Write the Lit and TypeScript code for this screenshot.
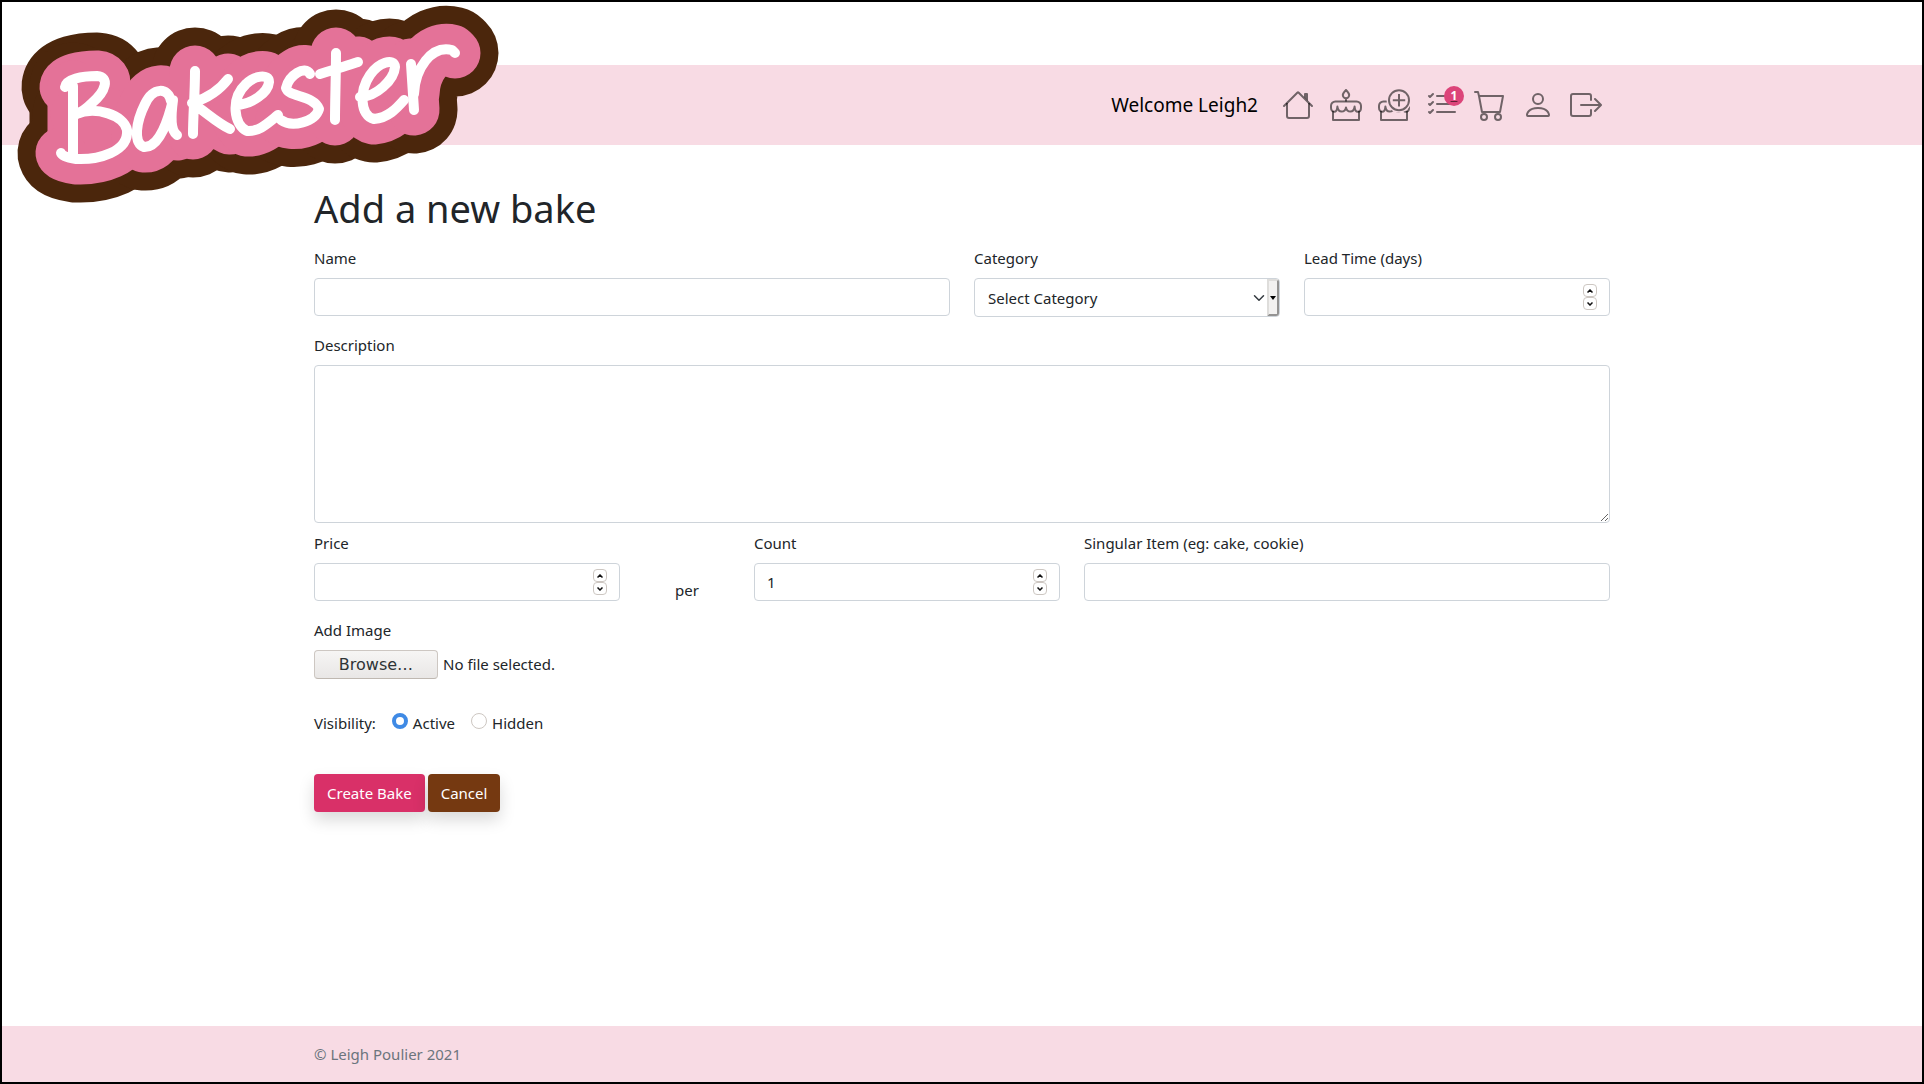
import { LitElement, html, css, svg } from "lit";
import { customElement, state } from "lit/decorators.js";

const cakeShape = svg`<path d="M1.500 11v4.500h13V11"/><path d="M2.700 6.200h10.600a2.200 2.200 0 0 1 2.200 2.200v1c0 1.200-.7 2-1.600 2s-1.500-1-1.600-2.600c-.2 1.500-1 2.500-2.100 2.500S8.200 10.500 8 9.200c-.2 1.300-1.100 2.100-2.200 2.100S3.900 10.300 3.700 8.800c-.1 1.600-.7 2.600-1.600 2.600s-1.600-.8-1.600-2v-1a2.200 2.200 0 0 1 2.200-2.200z"/>`;

const icons = {
  house: svg`<path fill-rule="evenodd" d="M2 13.500V7h1v6.500a.5.5 0 0 0 .5.5h9a.5.5 0 0 0 .5-.5V7h1v6.500a1.500 1.500 0 0 1-1.500 1.500h-9A1.500 1.500 0 0 1 2 13.500zm11-11V6l-2-2V2.500a.5.5 0 0 1 .5-.5h1a.5.5 0 0 1 .5.5z"/><path fill-rule="evenodd" d="M7.293 1.500a1 1 0 0 1 1.414 0l6.647 6.646a.5.5 0 0 1-.708.708L8 2.207 1.354 8.854a.5.5 0 1 1-.708-.708L7.293 1.500z"/>`,
  cart: svg`<path d="M0 1.500A.5.5 0 0 1 .5 1H2a.5.5 0 0 1 .485.379L2.890 3H14.500a.5.5 0 0 1 .491.592l-1.500 8A.5.5 0 0 1 13 12H4a.5.5 0 0 1-.491-.408L2.010 3.607 1.610 2H.5a.5.5 0 0 1-.5-.5zM3.102 4l1.313 7h8.170l1.313-7H3.102zM5 12a2 2 0 1 0 0 4 2 2 0 0 0 0-4zm7 0a2 2 0 1 0 0 4 2 2 0 0 0 0-4zm-7 1a1 1 0 1 1 0 2 1 1 0 0 1 0-2zm7 0a1 1 0 1 1 0 2 1 1 0 0 1 0-2z"/>`,
  person: svg`<path d="M8 8a3 3 0 1 0 0-6 3 3 0 0 0 0 6zm2-3a2 2 0 1 1-4 0 2 2 0 0 1 4 0zm4 8c0 1-1 1-1 1H3s-1 0-1-1 1-4 6-4 6 3 6 4zm-1-.004c-.001-.246-.154-.986-.832-1.664C11.516 10.680 10.289 10 8 10c-2.290 0-3.516.680-4.168 1.332-.678.678-.830 1.418-.832 1.664h10z"/>`,
  list: svg`<path fill-rule="evenodd" d="M5 11.500a.5.5 0 0 1 .5-.5h9a.5.5 0 0 1 0 1h-9a.5.5 0 0 1-.5-.5zm0-4a.5.5 0 0 1 .5-.5h9a.5.5 0 0 1 0 1h-9a.5.5 0 0 1-.5-.5zm0-4a.5.5 0 0 1 .5-.5h9a.5.5 0 0 1 0 1h-9a.5.5 0 0 1-.5-.5zM3.854 2.146a.5.5 0 0 1 0 .708l-1.500 1.500a.5.5 0 0 1-.708 0l-.5-.5a.5.5 0 1 1 .708-.708L2 3.293l1.146-1.147a.5.5 0 0 1 .708 0zm0 4a.5.5 0 0 1 0 .708l-1.500 1.500a.5.5 0 0 1-.708 0l-.5-.5a.5.5 0 1 1 .708-.708L2 7.293l1.146-1.147a.5.5 0 0 1 .708 0zm0 4a.5.5 0 0 1 0 .708l-1.500 1.500a.5.5 0 0 1-.708 0l-.5-.5a.5.5 0 0 1 .708-.708l.146.147 1.146-1.147a.5.5 0 0 1 .708 0z"/>`,
  exit: svg`<path fill-rule="evenodd" d="M10 12.500a.5.5 0 0 1-.5.5h-8a.5.5 0 0 1-.5-.5v-9a.5.5 0 0 1 .5-.5h8a.5.5 0 0 1 .5.5v2a.5.5 0 0 0 1 0v-2A1.500 1.500 0 0 0 9.500 2h-8A1.500 1.500 0 0 0 0 3.500v9A1.500 1.500 0 0 0 1.500 14h8a1.500 1.500 0 0 0 1.500-1.500v-2a.5.5 0 0 0-1 0v2z"/><path fill-rule="evenodd" d="M15.854 8.354a.5.5 0 0 0 0-.708l-3-3a.5.5 0 0 0-.708.708L14.293 7.500H5.500a.5.5 0 0 0 0 1h8.793l-2.147 2.146a.5.5 0 0 0 .708.708l3-3z"/>`,
  cake: svg`<g fill="none" stroke="currentColor" stroke-width="1" stroke-linejoin="round"><path d="M8 .5C7 1.500 6.400 2.200 6.400 3a1.600 1.600 0 0 0 3.200 0C9.600 2.200 9 1.500 8 .5zM8 4.500v1.700"/>${cakeShape}</g>`,
  cakePlus: svg`<mask id="cake-cut"><path fill="#fff" d="M0 0h16v16H0z"/><circle cx="10.500" cy="5.600" r="6.200" fill="#000"/></mask><g fill="none" stroke="currentColor" stroke-width="1" stroke-linejoin="round"><g mask="url(#cake-cut)">${cakeShape}</g><circle cx="10.500" cy="5.600" r="5"/><path d="M10.500 2.500v6.200M7.400 5.600h6.200"/></g>`,
};

const LETTERS = [
  "M65 87C66 79 82 76 97 76C110 77 106 91 92 103C87 108 82 112 76 114",
  "M73 86V155",
  "M76 114C96 106 124 115 127 130C129 152 98 160 76 159C68 158 62 156 61 153",
  "M171 101C168 87 153 87 145 104C136 122 133 143 144 147C160 148 169 117 173 100C171 115 170 130 177 135",
  "M195 71C195 94 193 115 193 134M228 79C219 91 205 99 192 103C206 112 217 123 230 129",
  "M236 105C252 104 268 93 269 82C269 73 254 76 246 84C230 99 234 125 247 131C259 132 268 123 278 115",
  "M310 74C305 65 289 75 286 88C288 97 314 95 319 109C315 122 292 128 281 120",
  "M336 53C336 77 335 100 335 120M320 74C333 70 346 66 358 62",
  "M360 97C376 97 394 80 395 67C394 57 378 63 370 75C359 91 360 116 374 119C388 118 397 108 404 100",
  "M411 64L414 110M414 94C415 69 431 45 452 50L455 53",
];

@customElement("app-root")
export class AppRoot extends LitElement {
  @state() private fileName = "No file selected.";

  static styles = css`
    :host { display: block; font: 15px/24px "Noto Sans", sans-serif; color: #212529; }
    * { box-sizing: border-box; }
    .page { min-height: 100vh; display: flex; flex-direction: column; border: 2px solid #000; background: #fff; }
    .container { width: 100%; max-width: 1320px; margin: 0 auto; padding: 0 12px; }
    header { display: grid; grid-template-rows: 63px 80px; }
    .band { grid-area: 2 / 1; background: #f8dbe4; display: flex; align-items: center; }
    .brand { grid-area: 1 / 1 / 3 / 2; justify-self: start; height: 0; z-index: 1; margin: 5px 0 0 16px; }
    .logo { display: block; width: 480px; height: 196px; overflow: visible; }
    nav { display: flex; justify-content: flex-end; align-items: center; color: #000; }
    .welcome { font-size: 19px; padding-right: 16px; }
    .link { display: grid; padding: 8px; color: rgba(0, 0, 0, .55); }
    .icon { display: block; width: 32px; height: 32px; grid-area: 1 / 1; }
    .badge { grid-area: 1 / 1; width: 20px; height: 20px; border-radius: 10px; background: #dc4479; color: #fff; font-size: 12px; line-height: 20px; font-weight: 700; text-align: center; position: relative; left: 18px; top: -3px; }
    .content { flex: 1; padding-top: 39px; padding-bottom: 48px; }
    h1 { margin: 0 0 14px; font-size: 38px; line-height: 48px; font-weight: 400; }
    .row { display: grid; grid-template-columns: repeat(12, 1fr); column-gap: 24px; margin-bottom: 16px; }
    .c1 { grid-column: span 1; }
    .c3 { grid-column: span 3; }
    .c5 { grid-column: span 5; }
    .c6 { grid-column: span 6; }
    .c12 { grid-column: span 12; }
    .tight { margin-bottom: 8px; }
    .label { display: block; margin-bottom: 8px; }
    .control { display: flex; align-items: center; width: 100%; height: 38px; border: 1px solid #ced4da; border-radius: 4px; background: #fff; color: #212529; font: inherit; padding: 0 12px; }
    .area { display: block; height: 158px; padding: 6px 12px; resize: vertical; }
    .bare { flex: 1; min-width: 0; border: 0; outline: 0; padding: 0; height: 36px; background: none; font: inherit; color: inherit; appearance: textfield; }
    .bare::-webkit-inner-spin-button { display: none; }
    .steps { display: flex; flex-direction: column; }
    .step { display: grid; place-items: center; width: 14px; height: 13px; padding: 0; border: 1px solid #cdc7c2; border-radius: 4px; background: #fff; color: #111; }
    .arrow { width: 6px; height: 4px; }
    .picker { display: grid; height: 39px; }
    .select { grid-area: 1 / 1; height: 39px; appearance: none; padding: 0 13px; }
    .marks { grid-area: 1 / 1; justify-self: end; display: flex; align-items: center; gap: 2px; padding: 1px; pointer-events: none; }
    .chevron { width: 12px; height: 12px; }
    .drop { display: grid; place-items: center; width: 12px; height: 37px; background: #f2f1f0; border: 2px solid #dedddb; border-right-color: #949392; border-bottom-color: #949392; border-radius: 0 3px 3px 0; }
    .triangle { width: 6px; height: 4px; }
    .per { text-align: center; padding-top: 47px; }
    .file { display: flex; align-items: center; gap: 5px; height: 28px; }
    .hidden-file { width: 1px; height: 1px; position: absolute; opacity: 0; }
    .browse { width: 124px; height: 29px; border: 1px solid #cdc7c2; border-bottom-color: #bfb8b1; border-radius: 4px; background: linear-gradient(#f6f5f4, #e9e7e6); font: 16px/28px "DejaVu Sans", sans-serif; color: #2e3436; text-align: center; }
    fieldset { border: 0; margin: 33px 0 0; padding: 0; display: flex; }
    .choice { display: flex; gap: 5px; margin-left: 16px; }
    .radio { appearance: none; width: 16px; height: 16px; margin: 2px 0 0; border: 1px solid #cdc7c2; border-radius: 50%; background: #fff; }
    .radio:checked { border: 4px solid #3f8ae5; }
    .actions { display: flex; gap: 3px; margin-top: 39px; }
    .button { height: 38px; padding: 0 13px; border: 0; border-radius: 4px; color: #fff; font: inherit; box-shadow: 0 8px 16px rgba(0, 0, 0, .15); }
    .create { background: #d93068; }
    .cancel { background: #753911; }
    footer { background: #f8dbe4; color: #6c757d; padding: 16px 0; }
  `;

  private icon(name: keyof typeof icons) {
    return html`<svg class="icon" viewBox="0 0 16 16" fill="currentColor" aria-hidden="true">${icons[name]}</svg>`;
  }

  private step(id: string, delta: number) {
    const input = this.renderRoot.querySelector<HTMLInputElement>("#" + id)!;
    delta > 0 ? input.stepUp() : input.stepDown();
  }

  private numberField(id: string, label: string, value = "") {
    return html`<div class="c3">
      <label class="label" for=${id}>${label}</label>
      <div class="control">
        <input class="bare" id=${id} type="number" .value=${value} />
        <div class="steps">
          <button class="step" type="button" aria-label="Increase" @click=${() => this.step(id, 1)}>
            <svg class="arrow" viewBox="0 0 6 4" fill="none" stroke="currentColor" stroke-width="1.500"><path d="M.5 3.500 3 1l2.500 2.500"/></svg>
          </button>
          <button class="step" type="button" aria-label="Decrease" @click=${() => this.step(id, -1)}>
            <svg class="arrow" viewBox="0 0 6 4" fill="none" stroke="currentColor" stroke-width="1.500"><path d="M.5.5 3 3 5.500.5"/></svg>
          </button>
        </div>
      </div>
    </div>`;
  }

  private onFile(e: Event) {
    this.fileName = (e.target as HTMLInputElement).files?.[0]?.name ?? "No file selected.";
  }

  render() {
    const strokes = LETTERS.map((d) => svg`<path d=${d} />`);
    return html`<div class="page">
      <header>
        <a class="brand" href="#" aria-label="Bakester">
          <svg class="logo" viewBox="18 7 480 196" fill="none" stroke-linecap="round" stroke-linejoin="round">
            <g stroke="#4b260c" stroke-width="87">${strokes}</g>
            <g stroke="#e47298" stroke-width="51">${strokes}</g>
            <g stroke="#fff" stroke-width="10">${strokes}</g>
          </svg>
        </a>
        <div class="band">
          <nav class="container">
            <span class="welcome">Welcome Leigh2</span>
            <a class="link" href="#" aria-label="Home">${this.icon("house")}</a>
            <a class="link" href="#" aria-label="Bakes">${this.icon("cake")}</a>
            <a class="link" href="#" aria-label="Add bake">${this.icon("cakePlus")}</a>
            <a class="link" href="#" aria-label="Orders">${this.icon("list")}<span class="badge">1</span></a>
            <a class="link" href="#" aria-label="Cart">${this.icon("cart")}</a>
            <a class="link" href="#" aria-label="Account">${this.icon("person")}</a>
            <a class="link" href="#" aria-label="Log out">${this.icon("exit")}</a>
          </nav>
        </div>
      </header>
      <main class="container content">
        <h1>Add a new bake</h1>
        <form @submit=${(e: Event) => e.preventDefault()}>
          <div class="row">
            <div class="c6">
              <label class="label" for="name">Name</label>
              <input class="control" id="name" type="text" />
            </div>
            <div class="c3">
              <label class="label" for="category">Category</label>
              <div class="picker">
                <select class="control select" id="category"><option>Select Category</option></select>
                <span class="marks">
                  <svg class="chevron" viewBox="0 0 16 16" fill="none" stroke="#343a40" stroke-width="2" stroke-linecap="round" stroke-linejoin="round"><path d="m2 5 6 6 6-6"/></svg>
                  <span class="drop"><svg class="triangle" viewBox="0 0 6 4"><path d="M0 0h6L3 4z"/></svg></span>
                </span>
              </div>
            </div>
            ${this.numberField("lead", "Lead Time (days)")}
          </div>
          <div class="row tight">
            <div class="c12">
              <label class="label" for="description">Description</label>
              <textarea class="control area" id="description"></textarea>
            </div>
          </div>
          <div class="row">
            ${this.numberField("price", "Price")}
            <div class="c1 per">per</div>
            ${this.numberField("count", "Count", "1")}
            <div class="c5">
              <label class="label" for="item">Singular Item (eg: cake, cookie)</label>
              <input class="control" id="item" type="text" />
            </div>
          </div>
          <label class="label" for="image">Add Image</label>
          <div class="file">
            <input class="hidden-file" id="image" type="file" @change=${this.onFile} />
            <label class="browse" for="image">Browse…</label>
            <span>${this.fileName}</span>
          </div>
          <fieldset>
            <span>Visibility:</span>
            <label class="choice"><input class="radio" type="radio" name="visibility" checked />Active</label>
            <label class="choice"><input class="radio" type="radio" name="visibility" />Hidden</label>
          </fieldset>
          <div class="actions">
            <button class="button create" type="submit">Create Bake</button>
            <button class="button cancel" type="button">Cancel</button>
          </div>
        </form>
      </main>
      <footer><div class="container">© Leigh Poulier 2021</div></footer>
    </div>`;
  }
}
